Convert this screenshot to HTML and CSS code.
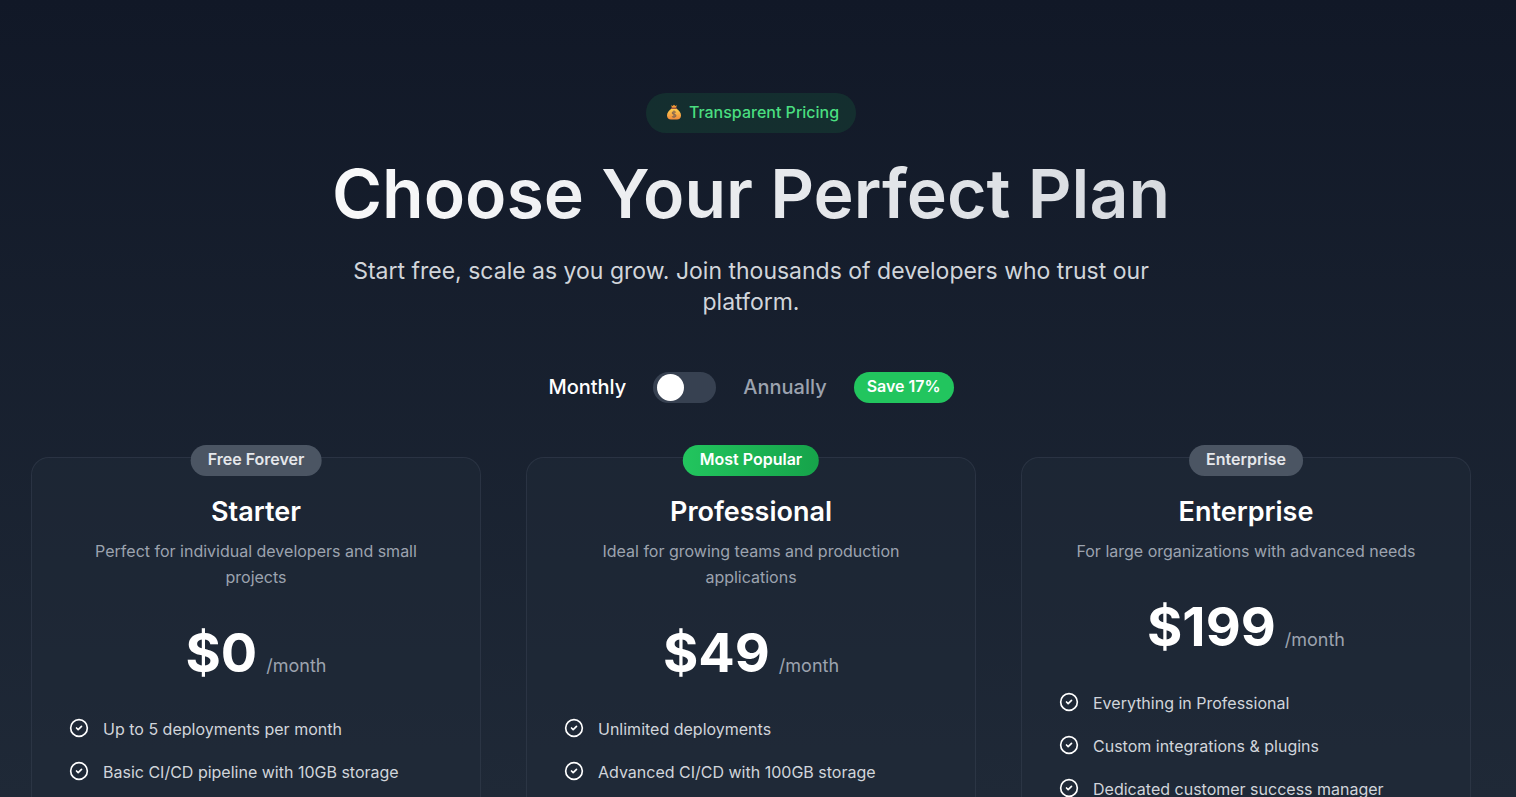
FILE: index.html
```html
<!DOCTYPE html>
<html lang="en">
<head>
<meta charset="utf-8">
<meta name="viewport" content="width=device-width, initial-scale=1">
<title>Pricing</title>
<link rel="stylesheet" href="styles.css">
</head>
<body>
<svg class="defs" aria-hidden="true">
  <symbol id="check" viewBox="0 0 24 24">
    <circle cx="12" cy="12" r="10"/>
    <path d="m9 12 2 2 4-4"/>
  </symbol>
</svg>
<main class="pricing">
  <header class="hero">
    <p class="tag">
      <svg class="bag" viewBox="0 0 16 16" aria-hidden="true">
        <defs>
          <linearGradient id="gold" x1="0" y1="0" x2="0" y2="1">
            <stop offset="0" stop-color="#ffd34f"/>
            <stop offset="1" stop-color="#f08a3c"/>
          </linearGradient>
        </defs>
        <path d="M5 1.2 6.6 2 8 .8 9.4 2 11 1.2 9.8 4H6.2Z" fill="#f59a35"/>
        <path d="M6 4.4h4c2.800 1.400 5 4 5 6.900 0 2.900-1.700 4.200-4 4.200H5c-2.300 0-4-1.300-4-4.200C1 8.400 3.200 5.800 6 4.400Z" fill="url(#gold)"/>
        <path d="M5.600 4.200h4.800" stroke="#9a5540" stroke-width="1.400" stroke-linecap="round"/>
        <path d="M9.900 8.300C9.300 7.600 6.300 7.300 6.300 9c0 1.600 3.600 1 3.600 2.700 0 1.600-3.100 1.500-3.800.6M8 6.600v7.400" fill="none" stroke="#8c6a50" stroke-width="1.200"/>
      </svg>
      Transparent Pricing
    </p>
    <h1 class="headline">Choose Your Perfect Plan</h1>
    <p class="lead">Start free, scale as you grow. Join thousands of developers who trust our platform.</p>
    <div class="billing">
      <span class="period period-on">Monthly</span>
      <button class="switch" type="button" role="switch" aria-checked="false" aria-label="Annual billing"><span class="knob"></span></button>
      <span class="period">Annually</span>
      <span class="save">Save 17%</span>
    </div>
  </header>
  <div class="plans">
    <section class="plan">
      <span class="ribbon">Free Forever</span>
      <h2 class="name">Starter</h2>
      <p class="about">Perfect for individual developers and small projects</p>
      <p class="price"><span class="amount">$0</span><span class="per">/month</span></p>
      <ul class="features">
        <li><svg class="tick" aria-hidden="true"><use href="#check"/></svg>Up to 5 deployments per month</li>
        <li><svg class="tick" aria-hidden="true"><use href="#check"/></svg>Basic CI/CD pipeline with 10GB storage</li>
      </ul>
    </section>
    <section class="plan">
      <span class="ribbon ribbon-hot">Most Popular</span>
      <h2 class="name">Professional</h2>
      <p class="about">Ideal for growing teams and production applications</p>
      <p class="price"><span class="amount">$49</span><span class="per">/month</span></p>
      <ul class="features">
        <li><svg class="tick" aria-hidden="true"><use href="#check"/></svg>Unlimited deployments</li>
        <li><svg class="tick" aria-hidden="true"><use href="#check"/></svg>Advanced CI/CD with 100GB storage</li>
      </ul>
    </section>
    <section class="plan">
      <span class="ribbon">Enterprise</span>
      <h2 class="name">Enterprise</h2>
      <p class="about">For large organizations with advanced needs</p>
      <p class="price"><span class="amount">$199</span><span class="per">/month</span></p>
      <ul class="features">
        <li><svg class="tick" aria-hidden="true"><use href="#check"/></svg>Everything in Professional</li>
        <li><svg class="tick" aria-hidden="true"><use href="#check"/></svg>Custom integrations &amp; plugins</li>
        <li><svg class="tick" aria-hidden="true"><use href="#check"/></svg>Dedicated customer success manager</li>
      </ul>
    </section>
  </div>
</main>
</body>
</html>
```
FILE: styles.css
```css
* {
  box-sizing: border-box;
  margin: 0;
  padding: 0;
}

html {
  background: #1f2937;
}

body {
  font-family: Inter, "Liberation Sans", sans-serif;
  font-size: 16px;
  line-height: 26px;
  color: #fff;
  min-height: 100vh;
  background: linear-gradient(to bottom, #111827, #1f2937 100vh);
}

.defs {
  display: none;
}

.pricing {
  padding: 93px 45px 45px 31px;
}

.hero {
  display: flex;
  flex-direction: column;
  align-items: center;
  text-align: center;
}

.tag {
  display: flex;
  align-items: center;
  gap: 7px;
  padding: 6px 17px 8px 20px;
  border-radius: 20px;
  background: rgba(34, 197, 94, 0.12);
  color: #4ade80;
  font-weight: 500;
}

.bag {
  width: 16px;
  height: 16px;
}

.headline {
  width: 100%;
  max-width: 1152px;
  margin-top: 26px;
  font-size: 68px;
  line-height: 68px;
  font-weight: 600;
  background: linear-gradient(to right, #fff, #d1d5db);
  background-clip: text;
  -webkit-background-clip: text;
  color: transparent;
}

.lead {
  max-width: 864px;
  margin-top: 29px;
  font-size: 23px;
  line-height: 31px;
  color: #d1d5db;
}

.billing {
  display: flex;
  align-items: center;
  gap: 27px;
  margin-top: 54px;
}

.period {
  font-size: 20px;
  line-height: 31px;
  font-weight: 500;
  color: #9ca3af;
}

.period-on {
  color: #fff;
}

.switch {
  display: flex;
  align-items: center;
  width: 63px;
  height: 31px;
  padding: 4px;
  border: 0;
  border-radius: 16px;
  background: #374151;
  cursor: pointer;
}

.knob {
  width: 27px;
  height: 27px;
  border-radius: 50%;
  background: #fff;
}

.save,
.ribbon {
  padding: 0 13px 2px;
  border-radius: 16px;
  line-height: 29px;
  font-weight: 600;
}

.save {
  background: #22c55e;
}

.plans {
  display: grid;
  grid-template-columns: repeat(3, 1fr);
  gap: 45px;
  margin-top: 54px;
}

.plan {
  position: relative;
  padding: 36px 37px;
  border: 1px solid rgba(55, 65, 81, 0.5);
  border-radius: 18px;
  background: rgba(31, 41, 55, 0.5);
  text-align: center;
}

.ribbon {
  position: absolute;
  top: -13px;
  left: 50%;
  transform: translateX(-50%);
  padding: 0 17px 2px;
  white-space: nowrap;
  background: #4b5563;
  color: #e5e7eb;
}

.ribbon-hot {
  background: linear-gradient(to right, #22c55e, #16a34a);
  color: #fff;
}

.name {
  font-size: 27px;
  line-height: 36px;
  font-weight: 600;
}

.about {
  margin-top: 8px;
  color: #9ca3af;
}

.price {
  display: flex;
  align-items: baseline;
  justify-content: center;
  gap: 9px;
  margin-top: 36px;
}

.amount {
  font-size: 54px;
  line-height: 54px;
  font-weight: 700;
}

.per {
  font-size: 18px;
  color: #9ca3af;
}

.features {
  display: grid;
  gap: 17px;
  margin-top: 36px;
  list-style: none;
  text-align: left;
  color: #d1d5db;
}

.features li {
  display: flex;
  align-items: flex-start;
  gap: 14px;
}

.tick {
  flex: none;
  width: 20px;
  height: 20px;
  margin-top: 2px;
  fill: none;
  stroke: #fff;
  stroke-width: 2;
  stroke-linecap: round;
  stroke-linejoin: round;
}
```
